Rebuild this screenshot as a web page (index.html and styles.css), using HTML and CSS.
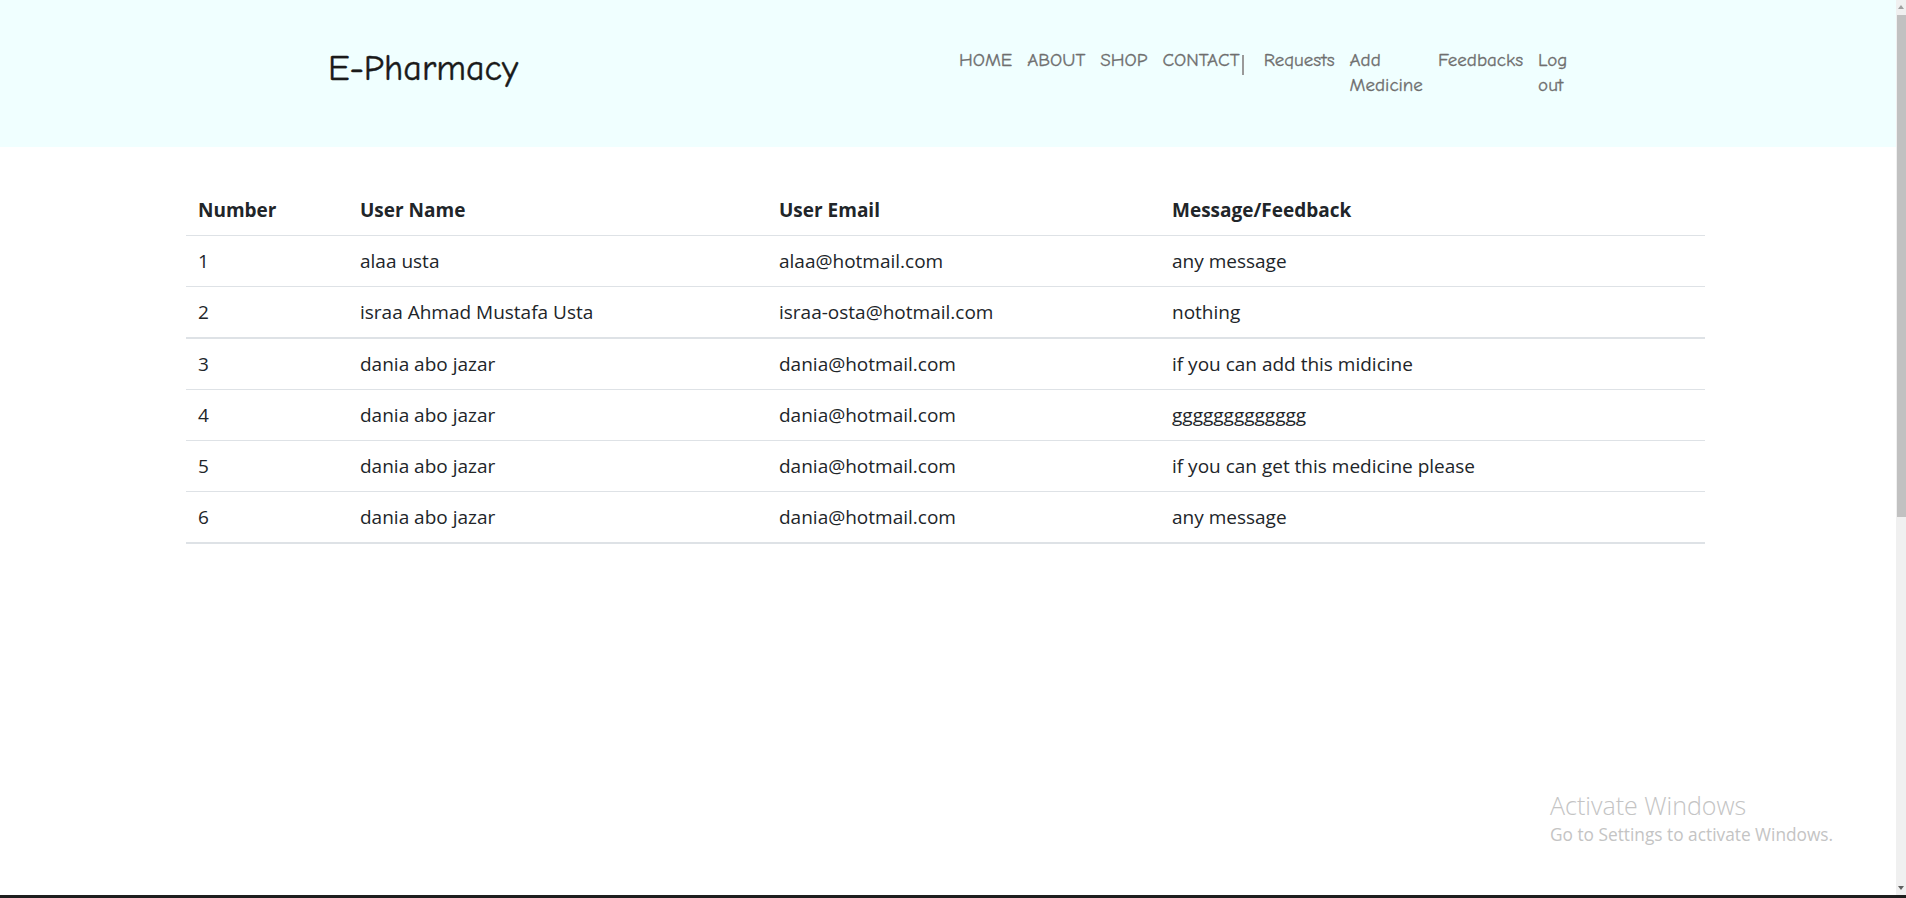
FILE: index.html
```html
<!DOCTYPE html>
<html lang="en">
<head>
<meta charset="utf-8">
<title>E-Pharmacy - Feedbacks</title>
<link rel="stylesheet" href="styles.css">
</head>
<body>
<div class="screen">
  <div class="window">
    <div class="page">
      <header class="site-header">
        <div class="header-inner">
          <div class="logo">E-Pharmacy</div>
          <nav class="nav">
            <a class="nav-link" href="#">HOME</a>
            <a class="nav-link" href="#">ABOUT</a>
            <a class="nav-link" href="#">SHOP</a>
            <a class="nav-link nav-contact" href="#">CONTACT<span class="sep"></span></a>
            <a class="nav-link" href="#">Requests</a>
            <a class="nav-link wrap" href="#">Add Medicine</a>
            <a class="nav-link" href="#">Feedbacks</a>
            <a class="nav-link wrap" href="#">Log out</a>
          </nav>
        </div>
      </header>
      <main class="content">
        <table class="table">
          <colgroup>
            <col class="c1"><col class="c2"><col class="c3"><col class="c4">
          </colgroup>
          <thead>
            <tr><th>Number</th><th>User Name</th><th>User Email</th><th>Message/Feedback</th></tr>
          </thead>
          <tbody>
            <tr><td>1</td><td>alaa usta</td><td>alaa@hotmail.com</td><td>any message</td></tr>
            <tr class="thick"><td>2</td><td>israa Ahmad Mustafa Usta</td><td>israa-osta@hotmail.com</td><td>nothing</td></tr>
            <tr><td>3</td><td>dania abo jazar</td><td>dania@hotmail.com</td><td>if you can add this midicine</td></tr>
            <tr><td>4</td><td>dania abo jazar</td><td>dania@hotmail.com</td><td>ggggggggggggg</td></tr>
            <tr><td>5</td><td>dania abo jazar</td><td>dania@hotmail.com</td><td>if you can get this medicine please</td></tr>
            <tr class="thick"><td>6</td><td>dania abo jazar</td><td>dania@hotmail.com</td><td>any message</td></tr>
          </tbody>
        </table>
      </main>
      <div class="activate">
        <div class="act-title">Activate Windows</div>
        <div class="act-sub">Go to Settings to activate Windows.</div>
      </div>
    </div>
    <div class="scrollbar">
      <div class="sb-arrow up"></div>
      <div class="sb-thumb"></div>
      <div class="sb-track"></div>
      <div class="sb-arrow down"></div>
    </div>
  </div>
  <div class="taskbar"></div>
</div>
</body>
</html>
```

FILE: styles.css
```css
* { box-sizing: border-box; }
html, body { margin: 0; padding: 0; }
body {
  font-family: "Open Sans", "Noto Sans", sans-serif;
  color: #212529;
  background: #fff;
  overflow: hidden;
}
.screen {
  width: 1906px;
  height: 898px;
  display: flex;
  flex-direction: column;
}
.window {
  flex: 1;
  display: flex;
  min-height: 0;
}
.page {
  flex: 1;
  position: relative;
  overflow: hidden;
}
.site-header {
  background: #f0ffff;
  height: 147px;
}
.header-inner {
  display: flex;
  align-items: flex-start;
  padding-left: 328px;
}
.logo {
  width: 631px;
  font-family: "Comic Sans MS", "Comic Neue", cursive;
  font-size: 36px;
  line-height: 50px;
  margin-top: 44px;
  color: #1a1a1a;
  -webkit-text-stroke: 0.4px #1a1a1a;
}
.nav {
  display: flex;
  align-items: flex-start;
  gap: 15px;
  margin-top: 48px;
  font-family: "Comic Sans MS", "Comic Neue", cursive;
  font-size: 19px;
  line-height: 25px;
}
.nav-link {
  color: #6e6e6e;
  text-decoration: none;
  display: block;
  -webkit-text-stroke: 0.3px #6e6e6e;
}
.nav-contact {
  display: flex;
  align-items: flex-start;
  margin-right: 5px;
}
.sep {
  display: inline-block;
  width: 2px;
  height: 20px;
  background: #9a9a9a;
  margin-top: 7px;
  margin-left: 2px;
}
.wrap { width: min-content; }
.content {
  padding: 38px 191px 0 186px;
}
.table {
  width: 100%;
  border-collapse: collapse;
  font-size: 19px;
  line-height: 26px;
}
.c1 { width: 162px; }
.c2 { width: 419px; }
.c3 { width: 393px; }
.table th, .table td {
  text-align: left;
  padding: 12px 12px;
  border-bottom: 1px solid #dee2e6;
  vertical-align: top;
}
.table th {
  font-weight: 700;
  color: #212529;
}
.table tr.thick td { border-bottom-width: 2px; }
.activate {
  position: absolute;
  left: 1550px;
  top: 789px;
  color: #c4c4c4;
  font-family: "Open Sans", "Noto Sans", sans-serif;
}
.act-title { font-size: 25px; line-height: 32px; font-weight: 300; }
.act-sub { font-size: 17.3px; line-height: 24px; margin-top: 2px; }
.scrollbar {
  width: 10px;
  background: #f0f0f0;
  display: flex;
  flex-direction: column;
}
.sb-arrow { height: 15px; position: relative; }
.sb-arrow.up::after {
  content: "";
  position: absolute;
  left: 2px; top: 5px;
  border-left: 3px solid transparent;
  border-right: 3px solid transparent;
  border-bottom: 4px solid #a0a0a0;
}
.sb-arrow.down::after {
  content: "";
  position: absolute;
  left: 2px; top: 6px;
  border-left: 3px solid transparent;
  border-right: 3px solid transparent;
  border-top: 4px solid #606060;
}
.sb-thumb {
  height: 502px;
  margin-left: 1px;
  background: #c1c1c1;
}
.sb-track { flex: 1; }
.taskbar {
  height: 3px;
  background: #1e1e1e;
}
```
